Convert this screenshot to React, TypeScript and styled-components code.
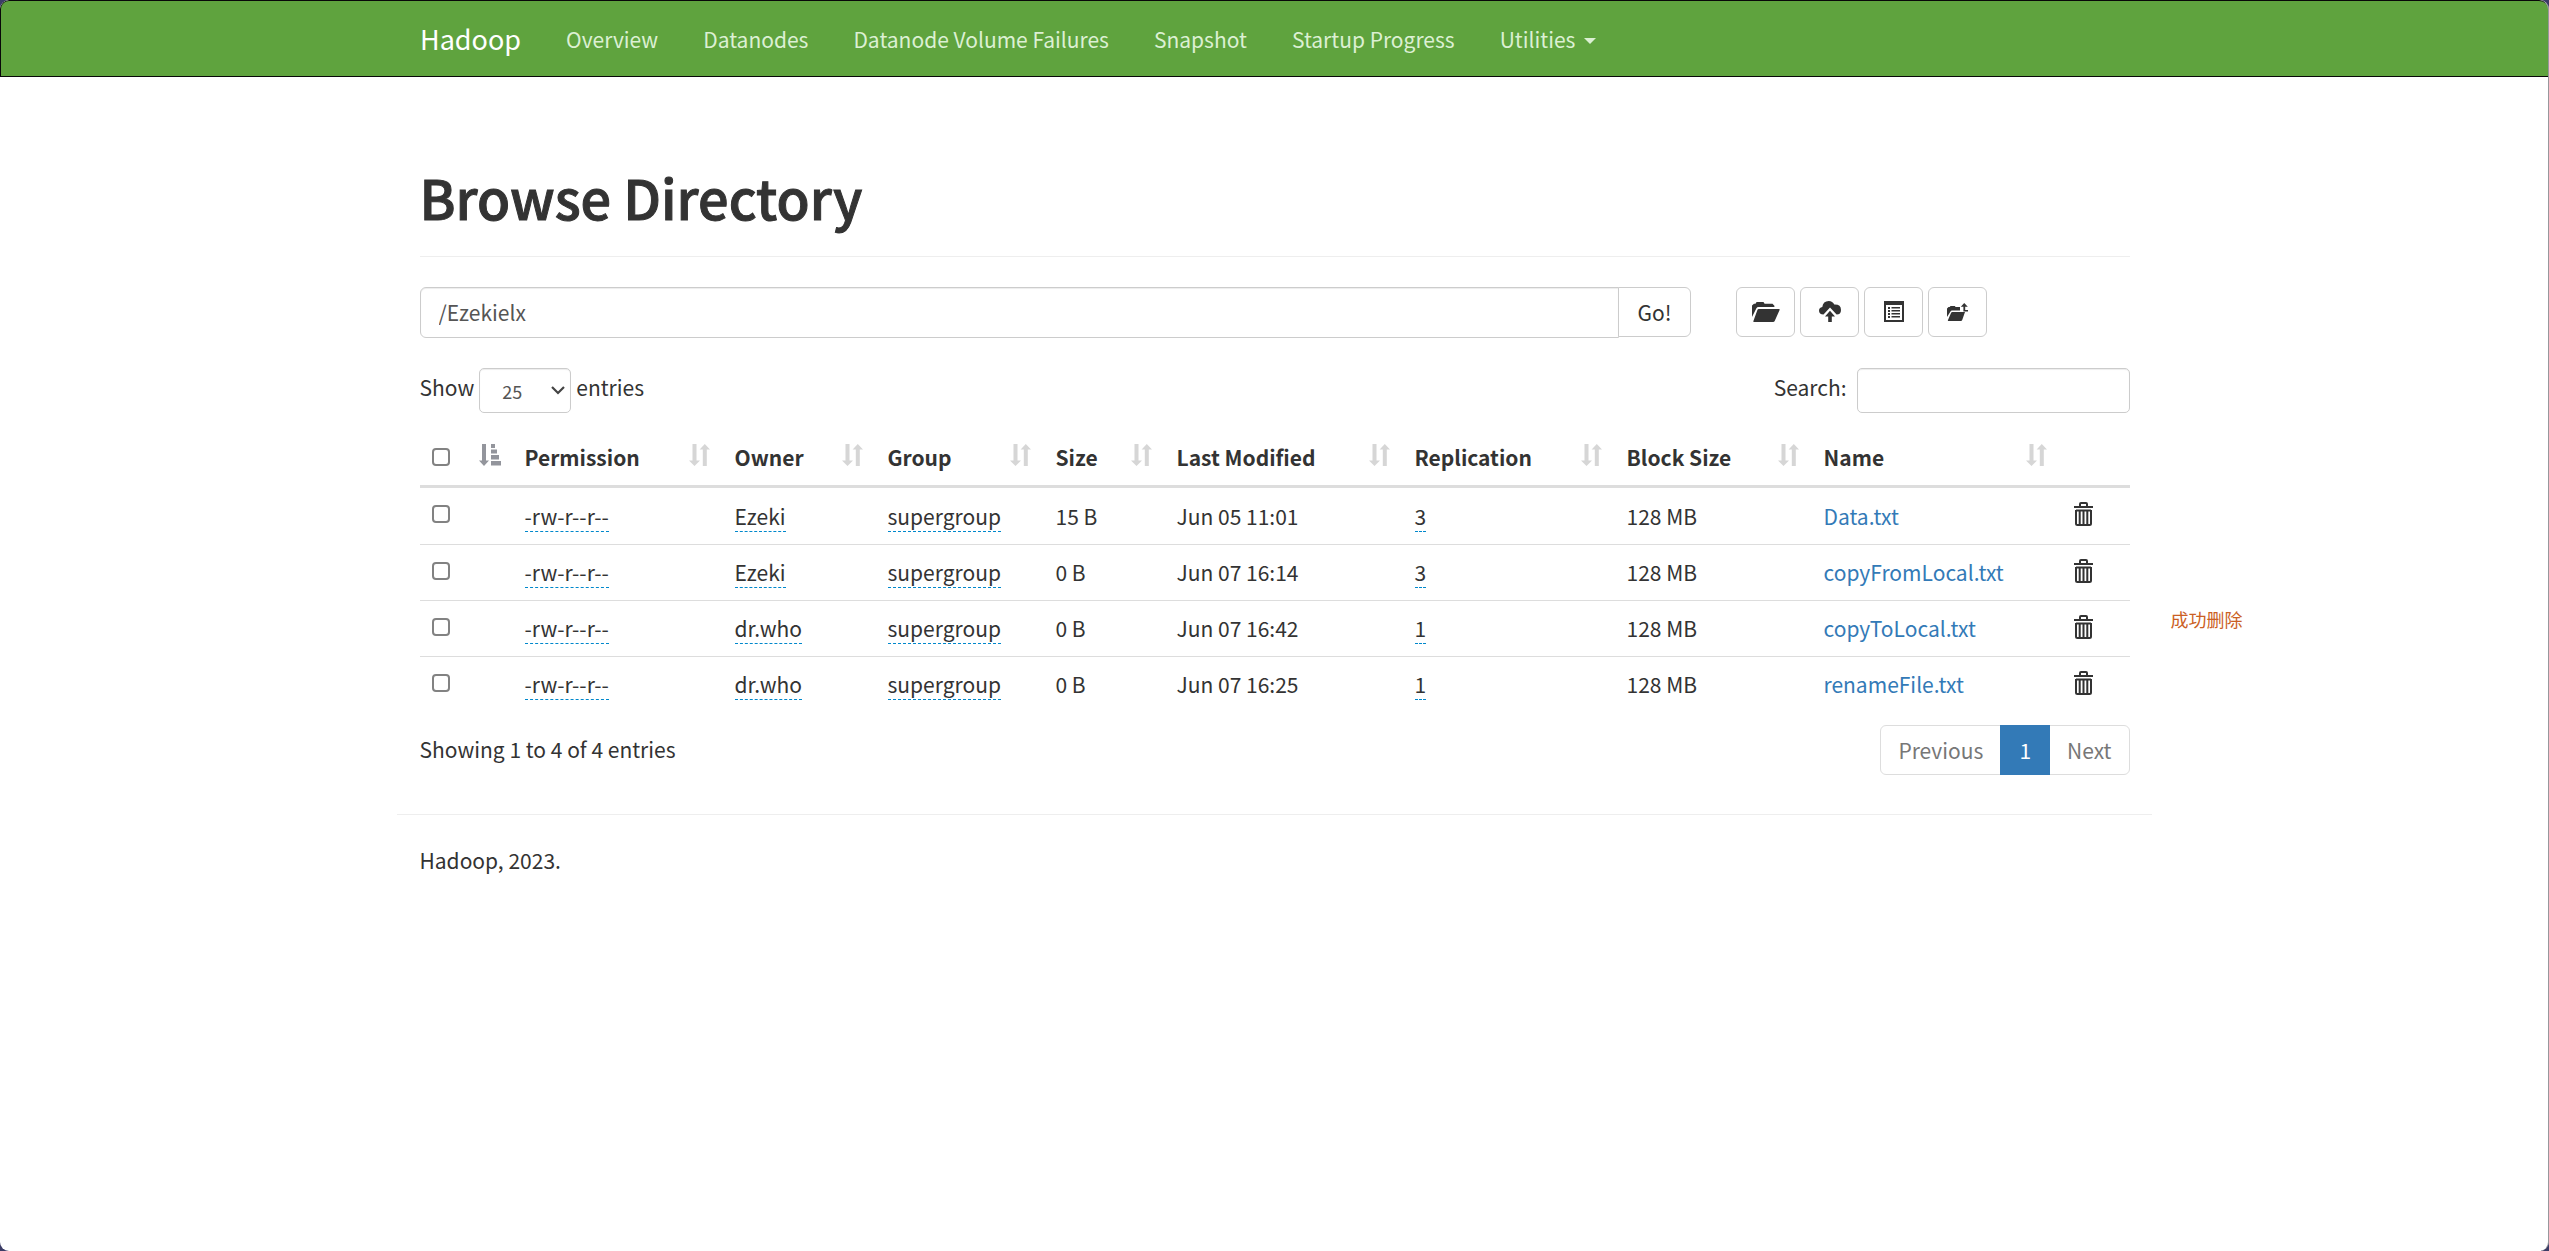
import React from "react";
import styled, { createGlobalStyle, css } from "styled-components";

const GlobalStyle = createGlobalStyle`
  *, *::before, *::after { box-sizing: border-box; }
  html { background: #3b3c66; }
  body {
    margin: 0;
    color: #333;
    font-family: "Noto Sans CJK SC", "Noto Sans", sans-serif;
    font-size: 21px;
    line-height: 30px;
  }
  button, input, select { font: inherit; color: inherit; margin: 0; }
`;

const Page = styled.div`
  min-height: 100vh;
  background: #fff;
  border-right: 1px solid #97979c;
  border-radius: 9px;
  overflow: hidden;
`;

const Navbar = styled.header`
  background: #5fa33e;
  border: 1px solid #080808;
  border-right: 0;
  border-radius: 9px 9px 0 0;
`;

const Container = styled.div`
  width: 100%;
  max-width: 1755px;
  margin: 0 auto;
  padding: 0 22px 0 23px;
`;

const NavInner = styled(Container)`
  display: flex;
  align-items: center;
  height: 75px;
`;

const Brand = styled.a`
  margin-right: 22px;
  color: #fff;
  font-size: 27px;
  text-decoration: none;
`;

const NavList = styled.nav`
  display: flex;
`;

const navItem = css`
  display: flex;
  align-items: center;
  gap: 9px;
  padding: 0 22px 0 23px;
  border: 0;
  background: none;
  color: #dcf0d3;
  text-decoration: none;
  white-space: nowrap;
`;
const NavLink = styled.a`${navItem}`;
const NavButton = styled.button`${navItem}`;

const Caret = styled.span`
  margin-top: 4px;
  border-top: 6px solid currentColor;
  border-left: 6px solid transparent;
  border-right: 6px solid transparent;
`;

const PageHeader = styled.div`
  margin: 88px 0 30px;
  padding-bottom: 27px;
  border-bottom: 1px solid #eee;
`;

const Title = styled.h1`
  margin: 0;
  font-size: 54px;
  line-height: 64px;
  font-weight: 500;
  -webkit-text-stroke: 1px #333;
`;

const Toolbar = styled.div`
  display: flex;
  gap: 45px;
`;

const PathForm = styled.form`
  display: flex;
  flex: 0 0 auto;
  width: calc(75% - 11px);
`;

const fieldBox = css`
  border: 1px solid #ccc;
  background: #fff;
  color: #555;
  box-shadow: inset 0 1px 1px rgba(0, 0, 0, 0.075);
`;

const PathInput = styled.input`
  ${fieldBox}
  flex: 1;
  min-width: 0;
  height: 51px;
  padding: 0 18px 2px;
  border-radius: 6px 0 0 6px;
`;

const GoButton = styled.button`
  width: 73px;
  height: 50px;
  margin-left: -1px;
  padding: 0;
  border: 1px solid #ccc;
  border-radius: 0 6px 6px 0;
  background: #fff;
`;

const Actions = styled.div`
  display: flex;
  gap: 5px;
`;

const ActionButton = styled.button`
  display: flex;
  align-items: center;
  justify-content: center;
  width: 59px;
  height: 50px;
  padding: 0;
  border: 1px solid #ccc;
  border-radius: 6px;
  background: #fff;
`;

const Filters = styled.div`
  display: flex;
  justify-content: space-between;
  margin-top: 30px;
`;

const FieldLabel = styled.label<{ $gap: number }>`
  display: flex;
  gap: ${(p) => p.$gap}px;
  line-height: 38px;
`;

const SelectBox = styled.span`
  display: grid;
  align-items: center;
  color: #444;
  > * { grid-area: 1 / 1; }
  > svg { justify-self: end; margin-right: 6px; pointer-events: none; }
`;

const LengthSelect = styled.select`
  ${fieldBox}
  appearance: none;
  width: 92px;
  height: 45px;
  padding: 0 22px;
  border-radius: 5px;
  font-size: 18px;
`;

const SearchInput = styled.input`
  ${fieldBox}
  width: 273px;
  height: 45px;
  padding: 0 15px;
  border-radius: 5px;
`;

const TableArea = styled.div`
  position: relative;
  margin-top: 17px;
`;

const Table = styled.table`
  width: 100%;
  table-layout: fixed;
  border-collapse: separate;
  border-spacing: 0;
`;

const HeadCell = styled.th`
  height: 58px;
  padding: 0 12px 2px;
  border-bottom: 3px solid #ddd;
  text-align: left;
  font-weight: 700;
`;

const HeadInner = styled.div`
  display: flex;
  justify-content: space-between;
  align-items: center;
  height: 30px;
  white-space: nowrap;
`;

const SortButton = styled.button`
  display: flex;
  height: 30px;
  padding: 2px 0 0;
  border: 0;
  background: none;
`;

const Row = styled.tr`
  & + & > td { border-top: 1px solid #ddd; }
`;

const Cell = styled.td<{ $control?: boolean }>`
  height: 56px;
  padding: 0 12px ${(p) => (p.$control ? 4 : 1)}px;
  white-space: nowrap;
`;

const Checkbox = styled.input`
  display: block;
  appearance: none;
  width: 18px;
  height: 18px;
  border: 2px solid #828282;
  border-radius: 4px;
  background: #fff;
  &:checked { background: #337ab7; }
`;

const Editable = styled.span`
  border-bottom: 1px dashed #0088cc;
  cursor: pointer;
`;

const FileLink = styled.a`
  color: #337ab7;
  text-decoration: none;
`;

const DeleteButton = styled.button`
  display: block;
  padding: 0 0 0 2px;
  border: 0;
  background: none;
  > svg { display: block; }
`;

const Notice = styled.div`
  position: absolute;
  top: 174px;
  left: calc(100% + 41px);
  color: #cb5f24;
  font-size: 18px;
  white-space: nowrap;
`;

const TableFooter = styled.div`
  display: flex;
  justify-content: space-between;
  margin-top: 13px;
`;

const Summary = styled.span`
  line-height: 48px;
`;

const Pagination = styled.nav`
  display: flex;
`;

const PageButton = styled.button<{ $active?: boolean }>`
  height: 50px;
  padding: 0 17px;
  border: 1px solid #ddd;
  background: #fff;
  color: #777;
  & + & { margin-left: -1px; }
  &:first-child { border-radius: 6px 0 0 6px; }
  &:last-child { border-radius: 0 6px 6px 0; }
  ${(p) => p.$active && css`
    z-index: 1;
    padding: 0 18px;
    border-color: #337ab7;
    background: #337ab7;
    color: #fff;
  `}
`;

const Divider = styled.hr`
  margin: 39px -22px 30px -23px;
  border: 0;
  border-top: 1px solid #eee;
`;

const Footer = styled.footer`
  padding-bottom: 30px;
`;

const FolderIcon = () => (
  <svg width="28" height="20" viewBox="0 0 28 20" fill="#333" aria-hidden="true">
    <path d="M0 15V3.500L2 1.800H3.500L4.600 0H11.500L12.600 1.800H20.500L22.400 3.700V5H6.500Q5 5 4.400 6.300Z" />
    <path d="M6.800 7H27Q28 7 27.600 8L22.800 18.700Q22.300 20 21 20H2Q.9 20 1.400 18.900L5.400 8Q5.800 7 6.800 7Z" />
  </svg>
);

const CloudUploadIcon = () => (
  <svg width="22" height="22" viewBox="0 0 22 22" fill="#333" aria-hidden="true">
    <path d="M4.500 13.500Q0 13.500 0 9.800Q0 6.600 3.300 6Q4 0 9.800 0Q13.500 0 15.300 3.600Q22 3.300 22 9Q22 13.500 17.600 13.500L11 6.600Z" />
    <path d="M11 9.800L16 15.500H12.800V21H9.200V15.500H6Z" />
  </svg>
);

const ListIcon = () => (
  <svg width="20" height="23" viewBox="0 0 20 23" fill="#333" aria-hidden="true">
    <path fillRule="evenodd" d="M0 0H20V21H0ZM2 4V19H18V4Z" />
    <path d="M4 6h2v2H4zM7.500 6H16v1.500H7.500zM4 9h2v2H4zM7.500 9H16v1.500H7.500zM4 12h2v2H4zM7.500 12H16v1.500H7.500zM4 15h2v2H4zM7.500 15H16v1.500H7.500z" />
  </svg>
);

const FolderUpIcon = () => (
  <svg width="21" height="18" viewBox="0 0 21 18" fill="#333" aria-hidden="true">
    <path d="M0 14V5.500L1.500 4H2.700L3.500 3H7.800L8.600 4H13V7.500H5Q3.900 7.500 3.500 8.500Z" />
    <path d="M5.400 9H18L15.300 16.800Q14.900 18 13.800 18H1.300Q.6 18 .9 17.200L4 10Q4.400 9 5.400 9Z" />
    <path d="M17.200 0L20.800 3.700H18.200V7H21V8.500H16.400V3.700H13.800Z" />
  </svg>
);

const SortIcon = () => (
  <svg width="22" height="22" viewBox="0 0 22 22" fill="#d6d6d6" aria-hidden="true">
    <path d="M3.500 0h4v16.500H11L5.500 22L0 16.500h3.500z" />
    <path d="M13.800 22h4V5.500H21L15.800 0L10.600 5.500h3.200z" />
  </svg>
);

const SortAscIcon = () => (
  <svg width="22" height="22" viewBox="0 0 22 22" fill="#93959c" aria-hidden="true">
    <path d="M3 0h4v16.500h3L5 22L0 16.500h3zM12 0h4v4h-4zM12 5.500h6v4h-6zM12 11h8v4.500h-8zM12 17h10v4.500H12z" />
  </svg>
);

const TrashIcon = () => (
  <svg width="19" height="24" viewBox="0 0 19 24" fill="none" stroke="#333" aria-hidden="true">
    <path d="M0 5H19M2 8.500H17" strokeWidth="2" />
    <path d="M6 5V2Q6 1 7 1H12Q13 1 13 2V5" strokeWidth="2" />
    <path d="M2 8V21.500Q2 23 3.500 23H15.500Q17 23 17 21.500V8" strokeWidth="2" />
    <path d="M5.700 9V22M9.500 9V22M13.300 9V22" strokeWidth="2" />
  </svg>
);

const ChevronIcon = () => (
  <svg width="14" height="9" viewBox="0 0 14 9" fill="none" stroke="#444" strokeWidth="2.200" aria-hidden="true">
    <path d="M1 1L7 7L13 1" />
  </svg>
);

const navLinks = ["Overview", "Datanodes", "Datanode Volume Failures", "Snapshot", "Startup Progress"];

const columns = [
  { title: "Permission", width: 210 },
  { title: "Owner", width: 153 },
  { title: "Group", width: 168 },
  { title: "Size", width: 121 },
  { title: "Last Modified", width: 238 },
  { title: "Replication", width: 212 },
  { title: "Block Size", width: 197 },
  { title: "Name", width: 248 },
];

const files = [
  { owner: "Ezeki", size: "15 B", modified: "Jun 05 11:01", replication: 3, name: "Data.txt" },
  { owner: "Ezeki", size: "0 B", modified: "Jun 07 16:14", replication: 3, name: "copyFromLocal.txt" },
  { owner: "dr.who", size: "0 B", modified: "Jun 07 16:42", replication: 1, name: "copyToLocal.txt" },
  { owner: "dr.who", size: "0 B", modified: "Jun 07 16:25", replication: 1, name: "renameFile.txt" },
];

const actions = [
  { label: "Create directory", Icon: FolderIcon },
  { label: "Upload files", Icon: CloudUploadIcon },
  { label: "Cut and paste", Icon: ListIcon },
  { label: "Parent directory", Icon: FolderUpIcon },
];

export default function App() {
  return (
    <Page>
      <GlobalStyle />
      <Navbar>
        <NavInner>
          <Brand href="#">Hadoop</Brand>
          <NavList>
            {navLinks.map((text) => (
              <NavLink key={text} href="#">{text}</NavLink>
            ))}
            <NavButton type="button">Utilities<Caret /></NavButton>
          </NavList>
        </NavInner>
      </Navbar>

      <Container as="main">
        <PageHeader>
          <Title>Browse Directory</Title>
        </PageHeader>

        <Toolbar>
          <PathForm onSubmit={(e: React.FormEvent) => e.preventDefault()}>
            <PathInput aria-label="Directory" defaultValue="/Ezekielx" />
            <GoButton type="submit">Go!</GoButton>
          </PathForm>
          <Actions>
            {actions.map(({ label, Icon }) => (
              <ActionButton key={label} type="button" aria-label={label}><Icon /></ActionButton>
            ))}
          </Actions>
        </Toolbar>

        <Filters>
          <FieldLabel $gap={5} htmlFor="length">
            Show
            <SelectBox>
              <LengthSelect id="length" defaultValue="25">
                <option>25</option>
                <option>50</option>
                <option>100</option>
              </LengthSelect>
              <ChevronIcon />
            </SelectBox>
            entries
          </FieldLabel>
          <FieldLabel $gap={10} htmlFor="search">
            Search:
            <SearchInput id="search" type="search" />
          </FieldLabel>
        </Filters>

        <TableArea>
          <Table>
            <colgroup>
              <col style={{ width: 93 }} />
              {columns.map((c) => <col key={c.title} style={{ width: c.width }} />)}
              <col style={{ width: 70 }} />
            </colgroup>
            <thead>
              <tr>
                <HeadCell>
                  <HeadInner>
                    <Checkbox type="checkbox" aria-label="Select all" />
                    <SortButton type="button" aria-label="Sort by selection"><SortAscIcon /></SortButton>
                  </HeadInner>
                </HeadCell>
                {columns.map((c) => (
                  <HeadCell key={c.title}>
                    <HeadInner>
                      {c.title}
                      <SortButton type="button" aria-label={`Sort by ${c.title}`}><SortIcon /></SortButton>
                    </HeadInner>
                  </HeadCell>
                ))}
                <HeadCell />
              </tr>
            </thead>
            <tbody>
              {files.map((f) => (
                <Row key={f.name}>
                  <Cell $control><Checkbox type="checkbox" aria-label={`Select ${f.name}`} /></Cell>
                  <Cell><Editable>-rw-r--r--</Editable></Cell>
                  <Cell><Editable>{f.owner}</Editable></Cell>
                  <Cell><Editable>supergroup</Editable></Cell>
                  <Cell>{f.size}</Cell>
                  <Cell>{f.modified}</Cell>
                  <Cell><Editable>{f.replication}</Editable></Cell>
                  <Cell>128 MB</Cell>
                  <Cell><FileLink href="#">{f.name}</FileLink></Cell>
                  <Cell $control>
                    <DeleteButton type="button" aria-label={`Delete ${f.name}`}><TrashIcon /></DeleteButton>
                  </Cell>
                </Row>
              ))}
            </tbody>
          </Table>
          <Notice>成功删除</Notice>
        </TableArea>

        <TableFooter>
          <Summary>Showing 1 to 4 of 4 entries</Summary>
          <Pagination aria-label="Pages">
            <PageButton type="button">Previous</PageButton>
            <PageButton type="button" $active>1</PageButton>
            <PageButton type="button">Next</PageButton>
          </Pagination>
        </TableFooter>

        <Divider />
        <Footer>Hadoop, 2023.</Footer>
      </Container>
    </Page>
  );
}
